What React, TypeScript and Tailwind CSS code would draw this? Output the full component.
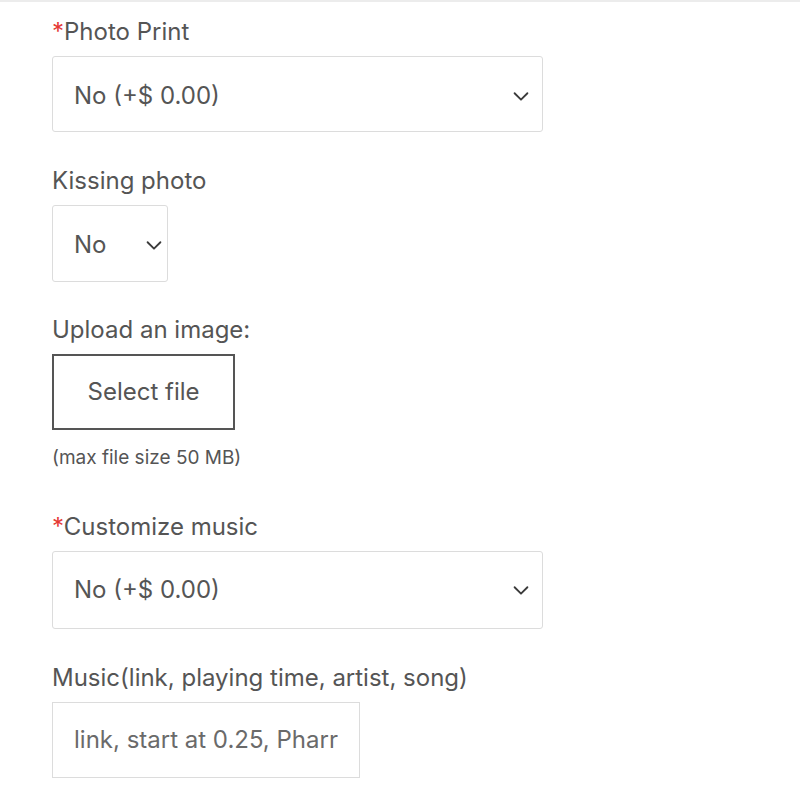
import React from "react";

function Chevron() {
  return (
    <svg width="22" height="22" viewBox="0 0 24 24" fill="none" stroke="#3a3a3a" strokeWidth="2" strokeLinecap="round" strokeLinejoin="round">
      <path d="M5 9l7 7 7-7" />
    </svg>
  );
}

export default function App() {
  return (
    <div className="w-[800px] h-[800px] bg-white overflow-hidden flex flex-col" style={{ fontFamily: "Inter, 'Noto Sans', sans-serif" }}>
      <div className="h-[2px] bg-[#ececec] shrink-0" />
      <div className="flex-1 pl-[52px] pt-[16px] text-[#555]">
        <div className="text-[24px] leading-[28px] mb-[10px]">
          <span className="text-[#e53935]">*</span>Photo Print
        </div>
        <div className="w-[491px] h-[76px] border border-[#dcdcdc] rounded-[3px] flex items-center justify-between pl-[21px] pr-[10px] text-[24px] pt-[3px]">
          <span>No (+$ 0.00)</span>
          <Chevron />
        </div>

        <div className="text-[24px] leading-[28px] mt-[35px] mb-[10px]">Kissing photo</div>
        <div className="w-[116px] h-[77px] border border-[#dcdcdc] rounded-[3px] flex items-center justify-between pl-[21px] pr-[2px] text-[24px] pt-[2px]">
          <span>No</span>
          <Chevron />
        </div>

        <div className="text-[24px] leading-[28px] mt-[34px] mb-[10px]">Upload an image:</div>
        <div className="w-[183px] h-[76px] border-2 border-[#555] flex items-center justify-center text-[24px]">
          Select file
        </div>
        <div className="text-[19px] leading-[20px] mt-[18px]">(max file size 50 MB)</div>

        <div className="text-[24px] leading-[28px] mt-[45px] mb-[10px]">
          <span className="text-[#e53935]">*</span>Customize music
        </div>
        <div className="w-[491px] h-[78px] border border-[#dcdcdc] rounded-[3px] flex items-center justify-between pl-[21px] pr-[10px] text-[24px]">
          <span>No (+$ 0.00)</span>
          <Chevron />
        </div>

        <div className="text-[24px] leading-[28px] mt-[35px] mb-[10px]">Music(link, playing time, artist, song)</div>
        <div className="w-[308px] h-[76px] border border-[#dcdcdc] flex items-center pl-[21px] text-[24px] text-[#6a6a6a] overflow-hidden whitespace-nowrap">
          link, start at 0.25, Pharr
        </div>
      </div>
    </div>
  );
}
